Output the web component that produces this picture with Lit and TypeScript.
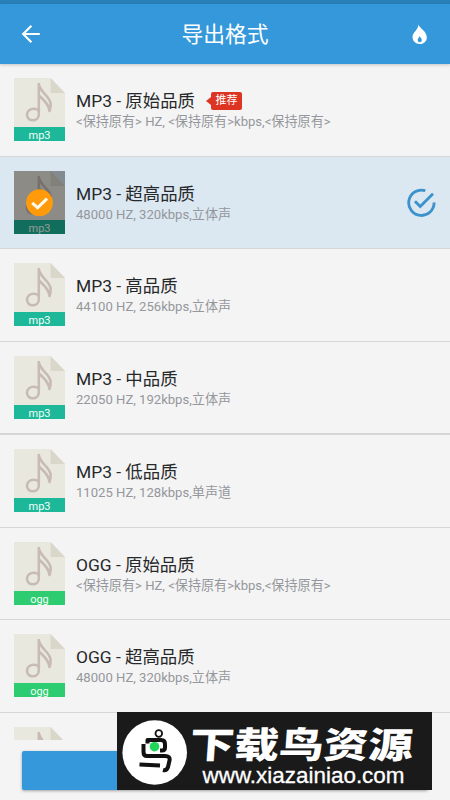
import { LitElement, html, css, svg, nothing } from "lit";
import { customElement, property, state } from "lit/decorators.js";
import { classMap } from "lit/directives/class-map.js";

interface Format {
  ext: "mp3" | "ogg" | "";
  name: string;
  detail: string;
  recommended?: boolean;
  sectionEnd?: boolean;
}

const FORMATS: Format[] = [
  { ext: "mp3", name: "MP3 - 原始品质", detail: "<保持原有> HZ, <保持原有>kbps,<保持原有>", recommended: true },
  { ext: "mp3", name: "MP3 - 超高品质", detail: "48000 HZ, 320kbps,立体声" },
  { ext: "mp3", name: "MP3 - 高品质", detail: "44100 HZ, 256kbps,立体声" },
  { ext: "mp3", name: "MP3 - 中品质", detail: "22050 HZ, 192kbps,立体声", sectionEnd: true },
  { ext: "mp3", name: "MP3 - 低品质", detail: "11025 HZ, 128kbps,单声道" },
  { ext: "ogg", name: "OGG - 原始品质", detail: "<保持原有> HZ, <保持原有>kbps,<保持原有>" },
  { ext: "ogg", name: "OGG - 超高品质", detail: "48000 HZ, 320kbps,立体声" },
  { ext: "", name: "", detail: "" },
];

@customElement("file-badge")
class FileBadge extends LitElement {
  @property() ext = "mp3";
  @property({ type: Boolean }) selected = false;

  static styles = css`
    :host { display: block; width: 51px; height: 63px; flex: none; }
    svg { display: block; }
    text { font: 11.5px Roboto, "Noto Sans", sans-serif; fill: #f4fffb; }
    .mp3 { fill: #1db899; }
    .ogg { fill: #2ecc71; }
  `;

  render() {
    return html`<svg width="51" height="63" viewBox="0 0 51 63">
      <path d="M0 0H36.5L51 15V63H0Z" fill="#e9e8df" />
      <path d="M36.5 0V15H51Z" fill="#d8d7ca" />
      <g fill="none" stroke="#c8bbb5" stroke-width="2.6" stroke-linejoin="round" stroke-linecap="round">
        <path d="M24.8 35V6C26 15 36.4 18 36.6 26C36.7 29 36.3 31 35.5 33C35 25 28 21 24.8 17" />
        <path d="M24.8 36.5C24.8 40.2 22 42.3 18.7 42.3C15.4 42.3 13 40 13 36.8C13 33.2 16 30.7 19.5 30.7C21.6 30.7 23.3 31.2 24.8 32.4" />
      </g>
      ${this.ext
        ? svg`<rect class=${this.ext} y="49" width="51" height="14" />
            <text x="25.5" y="60.6" text-anchor="middle" textLength=${this.ext === "mp3" ? 22 : 18.5} lengthAdjust="spacingAndGlyphs">${this.ext}</text>`
        : nothing}
      ${this.selected
        ? svg`<path d="M0 0H51V63H0Z" fill="#000" fill-opacity=".4" />
            <circle cx="25.5" cy="31.7" r="13.4" fill="#ff9b0a" />
            <path d="M18.2 31.8L23.6 36.8L33 27.6" fill="none" stroke="#fffdf0" stroke-width="3" />`
        : nothing}
    </svg>`;
  }
}

@customElement("format-row")
class FormatRow extends LitElement {
  @property({ attribute: false }) format!: Format;
  @property({ type: Boolean }) selected = false;

  static styles = css`
    :host { display: block; }
    .row {
      box-sizing: border-box; height: 92.5px; display: flex; align-items: flex-start;
      padding: 14px 14px 0 14px; border-bottom: 1px solid #d6d6d8; background: #f4f4f4;
    }
    .row.selected { background: #dbe7f1; }
    .row.section { height: 93.5px; border-bottom-width: 2px; }
    .text { flex: 1; margin: 12px 0 0 11px; white-space: nowrap; }
    .title { display: flex; align-items: center; height: 23px; }
    .name { font-size: 17.4px; line-height: 23px; color: #262829; }
    .detail { font-size: 13.1px; line-height: 17px; color: #94979c; }
    .tag { display: flex; align-items: center; margin-left: 11px; margin-top: -1px; }
    .tip { width: 0; height: 0; border: 4px solid transparent; border-right: 5px solid #dd3524; border-left: 0; }
    .label {
      width: 31px; height: 18px; border-radius: 2px; background: #dd3524; color: #fff;
      font-size: 11px; line-height: 17px; text-align: center;
    }
    .check { margin-top: 17px; flex: none; }
  `;

  render() {
    const f = this.format;
    return html`<div class=${classMap({ row: true, selected: this.selected, section: !!f.sectionEnd })}>
      <file-badge .ext=${f.ext} .selected=${this.selected}></file-badge>
      <div class="text">
        <div class="title">
          <span class="name">${f.name}</span>
          ${f.recommended ? html`<span class="tag"><i class="tip"></i><span class="label">推荐</span></span>` : nothing}
        </div>
        <div class="detail">${f.detail}</div>
      </div>
      ${this.selected
        ? html`<svg class="check" width="29" height="30" viewBox="0 0 29 30" fill="none" stroke="#3b92cd" stroke-width="2.8">
            <path d="M18.3 2.7A12.7 12.7 0 1 0 27.1 14.5" />
            <path d="M8 13.2L13.2 18.5L26 5.7" />
          </svg>`
        : nothing}
    </div>`;
  }
}

@customElement("site-mark")
class SiteMark extends LitElement {
  static styles = css`
    :host { display: block; width: 315px; height: 78px; background: #1a1a1a; }
    svg { display: block; }
    .cn { font: 900 36px "Noto Sans CJK SC", sans-serif; fill: #fff; }
    .url { font: 22px "Liberation Sans", sans-serif; fill: #fff; stroke: #fff; stroke-width: 0.3px; }
  `;

  render() {
    return html`<svg width="315" height="78" viewBox="0 0 315 78">
      <circle cx="37.7" cy="40.5" r="32.3" fill="#fff" />
      <g fill="none" stroke="#111" stroke-width="4" stroke-linejoin="round">
        <circle cx="41.8" cy="21.5" r="3.3" stroke-width="1.8" />
        <path d="M30.5 31.5V28H44Q48 28 48 32V35.5Q48 38.5 45 38.5H43" />
        <path d="M26.5 32V40Q26.5 44 30 44H48Q53.5 44 52.5 48.5L51 55Q49.5 59 46 58" />
        <path d="M22.5 52.5L43 53.5" />
      </g>
      <circle cx="37.5" cy="34.7" r="4.8" fill="#20d65a" />
      <text class="cn" transform="translate(72 46.3) skewX(-4)" textLength="223" lengthAdjust="spacingAndGlyphs">下载鸟资源</text>
      <text class="url" x="85.5" y="71" textLength="202" lengthAdjust="spacingAndGlyphs">www.xiazainiao.com</text>
    </svg>`;
  }
}

@customElement("app-root")
class AppRoot extends LitElement {
  @state() private selected = 1;

  static styles = css`
    :host {
      display: flex; flex-direction: column; position: relative; height: 800px; overflow: hidden;
      background: #f4f4f4; font-family: Roboto, "Noto Sans CJK SC", sans-serif;
    }
    .status { height: 4px; background: #2980b9; flex: none; }
    header {
      height: 60px; flex: none; box-sizing: border-box; display: flex; align-items: center; justify-content: space-between;
      padding: 0 18px; background: #3498db; color: #fff; box-shadow: 0 1px 3px rgba(0, 0, 0, 0.2); z-index: 1;
    }
    h1 { margin: 2px 0 0; font-size: 21.8px; font-weight: 400; line-height: 30px; }
    .list { height: 676px; flex: none; overflow: hidden; }
    .footer { flex: 1; padding: 11px 22px 10px; display: flex; }
    .export {
      flex: 1; border: 0; border-radius: 2px; background: #3498db; box-shadow: 0 1px 3px rgba(0, 0, 0, 0.35);
    }
    site-mark { position: absolute; left: 117px; top: 712px; }
  `;

  render() {
    return html`
      <div class="status"></div>
      <header>
        <svg width="26" height="26" viewBox="0 0 26 26" fill="none" stroke="#fff" stroke-width="2.2">
          <path d="M21.8 13H5.5M13.4 4.8L5.2 13L13.4 21.2" />
        </svg>
        <h1>导出格式</h1>
        <svg width="26" height="26" viewBox="0 0 26 26">
          <path fill="#fff" fill-rule="evenodd" d="M12.5 3.6C13.5 7.6 20.8 10.2 20.8 16.4C20.8 20.4 17.6 23 13.7 23C9.6 23 6.5 20.1 6.5 15.8C6.5 11.5 12 9.5 12.5 3.6ZM13.7 15.2C13 16.7 11.7 17.4 11.7 19.1C11.7 20.5 12.6 21.3 13.7 21.3C14.9 21.3 15.8 20.5 15.8 19.1C15.8 17.4 14.4 16.7 13.7 15.2Z" />
        </svg>
      </header>
      <div class="list">
        ${FORMATS.map(
          (f, i) => html`<format-row .format=${f} .selected=${i === this.selected} @click=${() => (this.selected = i)}></format-row>`
        )}
      </div>
      <div class="footer"><button class="export"></button></div>
      <site-mark></site-mark>
    `;
  }
}
